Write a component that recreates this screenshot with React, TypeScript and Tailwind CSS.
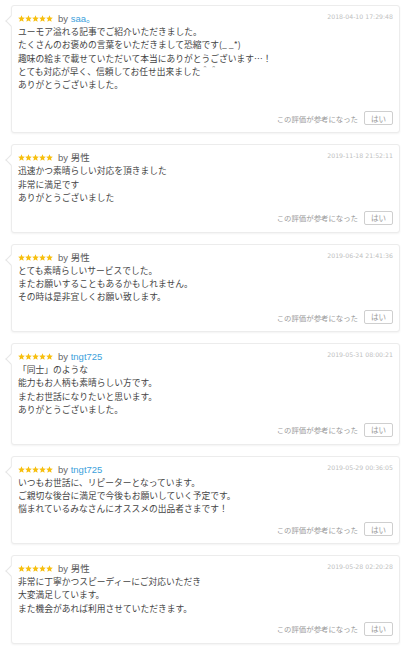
import React from "react";

type Review = {
  name: string;
  blue: boolean;
  date: string;
  lines: string[];
};

const reviews: Review[] = [
  {
    name: "saa。",
    blue: true,
    date: "2018-04-10 17:29:48",
    lines: [
      "ユーモア溢れる記事でご紹介いただきました。",
      "たくさんのお褒めの言葉をいただきまして恐縮です(_ _*)",
      "趣味の絵まで載せていただいて本当にありがとうございます…！",
      "とても対応が早く、信頼してお任せ出来ました＾＾",
      "ありがとうございました。",
      "",
    ],
  },
  {
    name: "男性",
    blue: false,
    date: "2019-11-18 21:52:11",
    lines: ["迅速かつ素晴らしい対応を頂きました", "非常に満足です", "ありがとうございました"],
  },
  {
    name: "男性",
    blue: false,
    date: "2019-06-24 21:41:36",
    lines: [
      "とても素晴らしいサービスでした。",
      "またお願いすることもあるかもしれません。",
      "その時は是非宜しくお願い致します。",
    ],
  },
  {
    name: "tngt725",
    blue: true,
    date: "2019-05-31 08:00:21",
    lines: [
      "「同士」のような",
      "能力もお人柄も素晴らしい方です。",
      "またお世話になりたいと思います。",
      "ありがとうございました。",
    ],
  },
  {
    name: "tngt725",
    blue: true,
    date: "2019-05-29 00:36:05",
    lines: [
      "いつもお世話に、リピーターとなっています。",
      "ご親切な後台に満足で今後もお願いしていく予定です。",
      "悩まれているみなさんにオススメの出品者さまです！",
    ],
  },
  {
    name: "男性",
    blue: false,
    date: "2019-05-28 02:20:28",
    lines: [
      "非常に丁寧かつスピーディーにご対応いただき",
      "大変満足しています。",
      "また機会があれば利用させていただきます。",
    ],
  },
];

function Star() {
  return (
    <svg width="7" height="7" viewBox="0 0 24 24" className="block">
      <polygon
        points="12,0.5 15.3,8.3 23.5,9 17.3,14.5 19.2,22.8 12,18.5 4.8,22.8 6.7,14.5 0.5,9 8.7,8.3"
        fill="#f7bf0e"
      />
    </svg>
  );
}

function Card({ r }: { r: Review }) {
  return (
    <div className="relative rounded-[3px] border border-[#ececec] bg-white shadow-[0_1px_2px_rgba(0,0,0,0.05)] px-[6px] pt-[6px] pb-[7px]">
      <div className="absolute left-[-5px] top-[11px] h-[8px] w-[8px] rotate-45 border-b border-l border-[#e6e6e6] bg-white" />
      <div className="relative flex h-[13px] items-start justify-between">
        <div className="flex h-[13px] items-center">
          <div className="flex">
            <Star />
            <Star />
            <Star />
            <Star />
            <Star />
          </div>
          <span
            className="ml-[5px] text-[9.5px] leading-[13px] text-[#666]"
            style={{ fontFamily: '"Liberation Sans", "Noto Sans CJK JP", sans-serif' }}
          >
            by <span className={r.blue ? "text-[#3d9fdc]" : "text-[#555]"}>{r.name}</span>
          </span>
        </div>
        <span
          className="text-[6.2px] leading-[10px] text-[#c0c0c0]"
          style={{ fontFamily: '"DejaVu Sans", "Liberation Sans", sans-serif' }}
        >
          {r.date}
        </span>
      </div>
      <div className="relative text-[8.75px] leading-[13.3px] text-[#444]">
        {r.lines.map((l, i) => (
          <div key={i} className="h-[13.3px] whitespace-nowrap">
            {l}
          </div>
        ))}
      </div>
      <div className="mt-[6.5px] flex items-center justify-end gap-[6px]">
        <span className="text-[7.4px] text-[#9a9a9a]">この評価が参考になった</span>
        <div className="flex h-[14px] w-[29px] items-center justify-center rounded-[2px] border border-[#cfcfcf] bg-white text-[7.5px] text-[#999]">
          はい
        </div>
      </div>
    </div>
  );
}

export default function App() {
  return (
    <div
      className="min-h-[650px] bg-white pt-[5px] pl-[11px] pr-[8px] flex flex-col gap-[11px]"
      style={{ fontFamily: '"Noto Sans CJK JP", "Noto Sans", sans-serif' }}
    >
      {reviews.map((r, i) => (
        <Card key={i} r={r} />
      ))}
    </div>
  );
}
